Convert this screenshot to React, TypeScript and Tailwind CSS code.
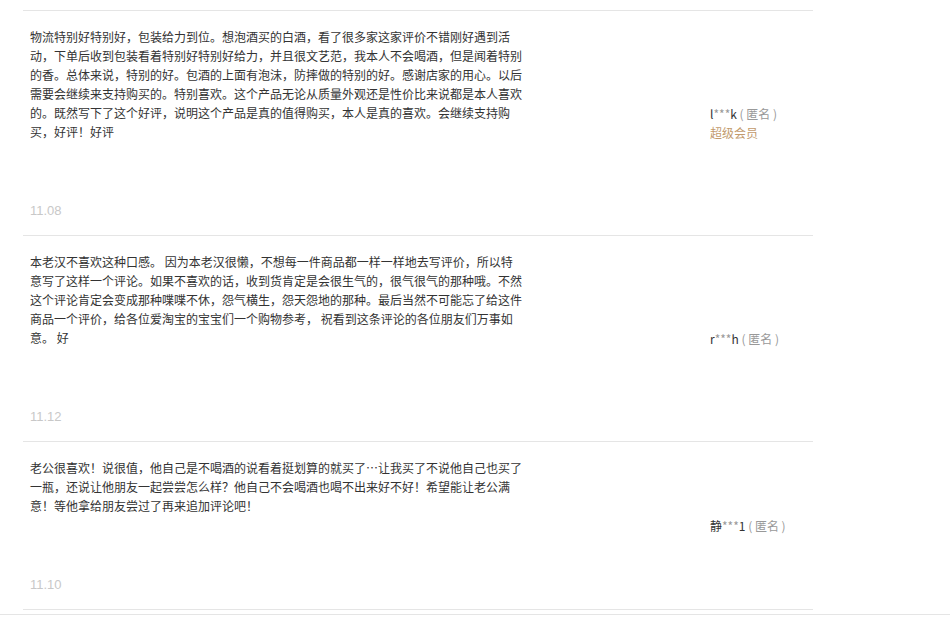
const reviews = [
    {
        lines: [
            "物流特别好特别好，包装给力到位。想泡酒买的白酒，看了很多家这家评价不错刚好遇到活",
            "动，下单后收到包装看着特别好特别好给力，并且很文艺范，我本人不会喝酒，但是闻着特别",
            "的香。总体来说，特别的好。包酒的上面有泡沫，防摔做的特别的好。感谢店家的用心。以后",
            "需要会继续来支持购买的。特别喜欢。这个产品无论从质量外观还是性价比来说都是本人喜欢",
            "的。既然写下了这个好评，说明这个产品是真的值得购买，本人是真的喜欢。会继续支持购",
            "买，好评！好评",
        ],
        date: "11.08",
        first: "l",
        last: "k",
        vip: true,
    },
    {
        lines: [
            "本老汉不喜欢这种口感。 因为本老汉很懒，不想每一件商品都一样一样地去写评价，所以特",
            "意写了这样一个评论。如果不喜欢的话，收到货肯定是会很生气的，很气很气的那种哦。不然",
            "这个评论肯定会变成那种喋喋不休，怨气横生，怨天怨地的那种。最后当然不可能忘了给这件",
            "商品一个评价，给各位爱淘宝的宝宝们一个购物参考， 祝看到这条评论的各位朋友们万事如",
            "意。 好",
        ],
        date: "11.12",
        first: "r",
        last: "h",
        vip: false,
    },
    {
        lines: [
            "老公很喜欢！说很值，他自己是不喝酒的说看着挺划算的就买了…让我买了不说他自己也买了",
            "一瓶，还说让他朋友一起尝尝怎么样？他自己不会喝酒也喝不出来好不好！希望能让老公满",
            "意！等他拿给朋友尝过了再来追加评论吧！",
        ],
        date: "11.10",
        first: "静",
        last: "1",
        vip: false,
    },
];

export default function App() {
    return (
        <div
            className="w-[950px] h-[623px] bg-white pt-[10px] overflow-hidden"
            style={{ fontFamily: '"Noto Sans CJK SC", "Liberation Sans", sans-serif' }}
        >
            <div className="ml-[23px] w-[790px] border-b border-[#e5e5e5]">
                {reviews.map((r) => (
                    <div key={r.date} className="flex border-t border-[#e5e5e5]">
                        <div className="w-[687px] pl-[7px] pt-[16px] pb-[15px]">
                            <div className="text-[12px] leading-[19px] text-[#333]">
                                {r.lines.map((l, i) => (
                                    <div key={i} className="whitespace-pre">
                                        {l}
                                    </div>
                                ))}
                            </div>
                            <div className="mt-[60px] text-[13px] leading-[19px] text-[#c8c8c8] font-['Liberation_Sans',sans-serif]">
                                {r.date}
                            </div>
                        </div>
                        <div className="flex flex-col justify-center text-[12px] leading-[19px]">
                            <div className="whitespace-nowrap">
                                <span className="text-[#333]">{r.first}</span>
                                <span className="text-[#999]">***</span>
                                <span className="text-[#333]">{r.last}</span>
                                <span className="text-[#999] whitespace-pre"> ( 匿名 )</span>
                            </div>
                            {r.vip && <div className="text-[#c29a6c]">超级会员</div>}
                        </div>
                    </div>
                ))}
            </div>
            <div className="mt-[4px] border-t border-[#e5e5e5]" />
        </div>
    );
}
